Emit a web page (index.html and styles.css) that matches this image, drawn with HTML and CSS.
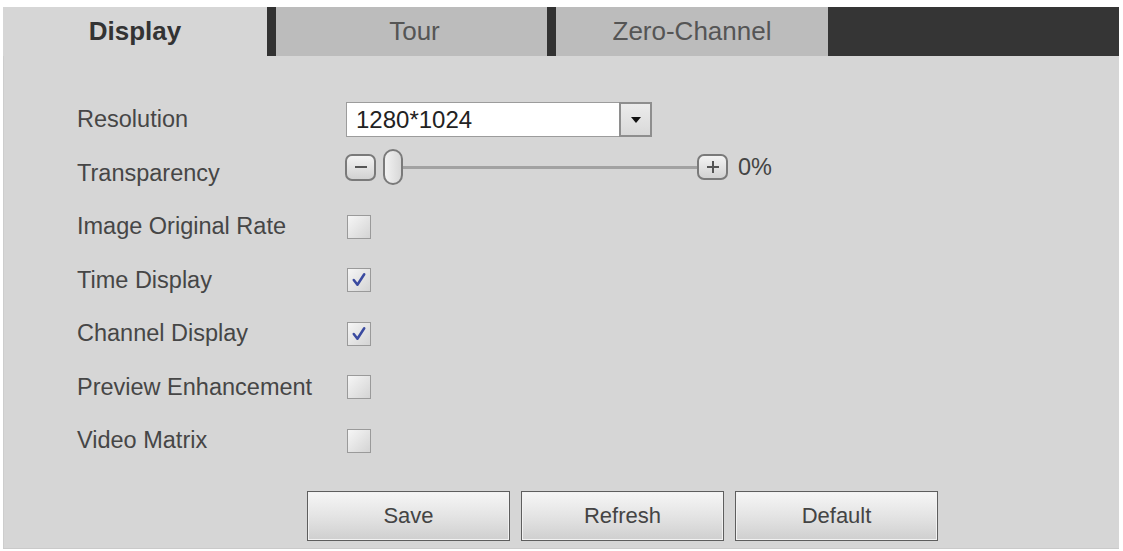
FILE: index.html
```html
<!DOCTYPE html>
<html lang="en">
<head>
<meta charset="utf-8">
<title>Display</title>
<link rel="stylesheet" href="styles.css">
</head>
<body>
<div class="panel">
  <div class="tabs">
    <div class="tab tab-active">Display</div>
    <div class="tab-sep"></div>
    <div class="tab tab-tour">Tour</div>
    <div class="tab-sep"></div>
    <div class="tab tab-zero">Zero-Channel</div>
    <div class="tab-fill"></div>
  </div>

  <div class="form">
    <div class="label">Resolution</div>
    <div class="control">
      <div class="select">
        <span class="select-value">1280*1024</span>
        <span class="select-btn"><span class="select-arrow"></span></span>
      </div>
    </div>

    <div class="label">Transparency</div>
    <div class="control">
      <div class="slider">
        <span class="step-btn"><svg width="14" height="4" viewBox="0 0 14 4"><rect x="1" y="1" width="12" height="2" fill="#555"/></svg></span>
        <span class="thumb"></span>
        <span class="track"></span>
        <span class="step-btn step-plus"><svg width="14" height="14" viewBox="0 0 14 14"><rect x="1" y="6" width="12" height="2" fill="#555"/><rect x="6" y="1" width="2" height="12" fill="#555"/></svg></span>
        <span class="percent">0%</span>
      </div>
    </div>

    <div class="label">Image Original Rate</div>
    <div class="control"><span class="checkbox"></span></div>

    <div class="label">Time Display</div>
    <div class="control"><span class="checkbox"><svg width="22" height="22" viewBox="0 0 21 21"><path d="M5.5 10.5 L9 15 L15.5 5" fill="none" stroke="#3a4aa0" stroke-width="2.4" stroke-linecap="round" stroke-linejoin="round"/></svg></span></div>

    <div class="label">Channel Display</div>
    <div class="control"><span class="checkbox"><svg width="22" height="22" viewBox="0 0 21 21"><path d="M5.5 10.5 L9 15 L15.5 5" fill="none" stroke="#3a4aa0" stroke-width="2.4" stroke-linecap="round" stroke-linejoin="round"/></svg></span></div>

    <div class="label">Preview Enhancement</div>
    <div class="control"><span class="checkbox"></span></div>

    <div class="label">Video Matrix</div>
    <div class="control"><span class="checkbox"></span></div>
  </div>

  <div class="actions">
    <button class="btn">Save</button>
    <button class="btn">Refresh</button>
    <button class="btn">Default</button>
  </div>
</div>
</body>
</html>
```

FILE: styles.css
```css
html, body {
  margin: 0;
  padding: 0;
  background: #ffffff;
}

body {
  font-family: "Liberation Sans", Arial, sans-serif;
  width: 1123px;
  height: 551px;
  overflow: hidden;
}

.panel {
  margin: 7px 4px 0 3px;
  height: 542px;
  background: #d6d6d6;
  box-shadow: inset 0 -1px 0 #cacaca, inset 1px 0 0 #cdcdcd;
}

.tabs {
  display: flex;
  height: 49px;
}

.tab {
  display: flex;
  align-items: center;
  justify-content: center;
  font-size: 26px;
  color: #555;
  background: #bcbcbc;
}

.tab-active {
  width: 264px;
  background: #d6d6d6;
  color: #333;
  font-weight: bold;
}

.tab-tour {
  width: 271px;
  padding-left: 6px;
  box-sizing: border-box;
}

.tab-zero {
  width: 272px;
}

.tab-sep {
  width: 9px;
  background: #323232;
}

.tab-fill {
  flex: 1;
  background: #353535;
}

.form {
  display: grid;
  grid-template-columns: 269px 1fr;
  grid-auto-rows: 53.5px;
  align-items: center;
  padding: 37px 0 0 74px;
}

.label {
  font-size: 23.5px;
  color: #464646;
  white-space: nowrap;
}

.control {
  display: flex;
  align-items: center;
}

.select {
  display: flex;
  width: 306px;
  height: 35px;
  box-sizing: border-box;
  border: 1px solid #9c9c9c;
  background: #ffffff;
}

.select-value {
  flex: 1;
  display: flex;
  align-items: center;
  padding-left: 9px;
  font-size: 24px;
  color: #222;
}

.select-btn {
  width: 33px;
  margin: -1px -1px -1px 0;
  box-sizing: border-box;
  border: 2px solid #8e8e8e;
  background: linear-gradient(#ececec, #d9d9d9);
  display: flex;
  align-items: center;
  justify-content: center;
}

.select-arrow {
  width: 0;
  height: 0;
  border-left: 5px solid transparent;
  border-right: 5px solid transparent;
  border-top: 6px solid #111;
}

.slider {
  display: flex;
  align-items: center;
  margin-left: -1px;
  margin-bottom: 12px;
}

.step-btn {
  width: 31px;
  height: 27px;
  box-sizing: border-box;
  border: 2px solid #7a7a7a;
  border-radius: 7px;
  background: linear-gradient(#f3f3f3, #d2d2d2);
  display: flex;
  align-items: center;
  justify-content: center;
}

.thumb {
  width: 20px;
  height: 36px;
  margin-left: 7px;
  box-sizing: border-box;
  border: 2px solid #7a7a7a;
  border-radius: 10px;
  background: linear-gradient(90deg, #f2f2f2, #d8d8d8);
}

.track {
  width: 294px;
  height: 3px;
  background: #a2a2a2;
}

.step-plus {
  height: 26px;
}

.percent {
  margin-left: 10px;
  font-size: 23.5px;
  color: #444;
}

.checkbox {
  width: 24px;
  height: 24px;
  margin-left: 1px;
  box-sizing: border-box;
  border: 1px solid #9a9a9a;
  background: linear-gradient(135deg, #f6f6f6, #d4d4d4);
  display: flex;
  align-items: center;
  justify-content: center;
}

.actions {
  display: flex;
  gap: 11px;
  padding-left: 304px;
  margin-top: 23px;
}

.btn {
  width: 203px;
  height: 50px;
  margin: 0;
  padding: 0;
  box-sizing: border-box;
  border: 1px solid #5e5e5e;
  background: linear-gradient(#f6f6f6 0%, #e4e4e4 50%, #cfcfcf 100%);
  box-shadow: inset 0 0 0 1px #f2f2f2;
  font-family: "Liberation Sans", Arial, sans-serif;
  font-size: 22px;
  color: #444;
}
```
